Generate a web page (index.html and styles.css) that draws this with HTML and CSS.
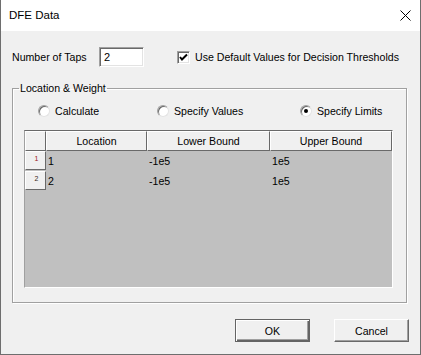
FILE: index.html
```html
<!DOCTYPE html>
<html lang="en">
<head>
    <meta charset="UTF-8">
    <title>DFE Data</title>
    <link rel="stylesheet" href="styles.css">
</head>
<body>
    <div class="dialog">
        <div class="titlebar">
            <span class="title">DFE Data</span>
            <svg class="close" width="11" height="11" viewBox="0 0 11 11">
                <path d="M0.5 0.5 L10.5 10.5 M10.5 0.5 L0.5 10.5" stroke="#000" stroke-width="1" fill="none"/>
            </svg>
        </div>

        <div class="content">
            <div class="taps-row">
                <span class="taps-label">Number of Taps</span>
                <div class="textbox">2</div>
                <div class="checkbox">
                    <svg width="9" height="9" viewBox="0 0 9 9">
                        <path d="M1 4 L3 6.5 L8 1.5" stroke="#000" stroke-width="2" fill="none"/>
                    </svg>
                </div>
                <span class="check-label">Use Default Values for Decision Thresholds</span>
            </div>

            <fieldset class="group">
                <legend>Location &amp; Weight</legend>
                <div class="radio-row">
                    <div class="radio radio-calc"><span class="dot"></span>Calculate</div>
                    <div class="radio radio-values"><span class="dot"></span>Specify Values</div>
                    <div class="radio"><span class="dot checked"></span>Specify Limits</div>
                </div>

                <div class="grid">
                    <div class="grid-row grid-head">
                        <div class="head-cell corner"></div>
                        <div class="head-cell">Location</div>
                        <div class="head-cell">Lower Bound</div>
                        <div class="head-cell">Upper Bound</div>
                    </div>
                    <div class="grid-row">
                        <div class="row-head first">1</div>
                        <div class="cell">1</div>
                        <div class="cell">-1e5</div>
                        <div class="cell">1e5</div>
                    </div>
                    <div class="grid-row">
                        <div class="row-head">2</div>
                        <div class="cell">2</div>
                        <div class="cell">-1e5</div>
                        <div class="cell">1e5</div>
                    </div>
                </div>
            </fieldset>

            <div class="buttons">
                <button class="btn default">OK</button>
                <button class="btn">Cancel</button>
            </div>
        </div>
    </div>
</body>
</html>
```

FILE: styles.css
```css
* {
    box-sizing: border-box;
    margin: 0;
    padding: 0;
}

body {
    background: #f0f0f0;
    font-family: "Liberation Sans", Arial, sans-serif;
    font-size: 10.6px;
    color: #000;
}

.dialog {
    width: 421px;
    height: 355px;
    background: #f0f0f0;
    border: 1px solid #6e6e6e;
    border-top: none;
}

.titlebar {
    height: 31px;
    background: #fff;
    display: flex;
    align-items: center;
    justify-content: space-between;
    padding: 0 9px 0 8px;
}

.title {
    font-size: 11.5px;
    margin-top: -2px;
}

.close {
    display: block;
    margin-top: -1px;
}

.content {
    padding: 16px 11px 0 11px;
}

/* 顶部一行 */
.taps-row {
    display: flex;
    align-items: center;
    height: 20px;
}

.taps-label {
    width: 87px;
}

.textbox {
    width: 45px;
    height: 20px;
    background: #fff;
    border-top: 1px solid #a0a0a0;
    border-left: 1px solid #a0a0a0;
    border-right: 1px solid #fff;
    border-bottom: 1px solid #fff;
    box-shadow: inset 1px 1px 0 #696969, inset -1px -1px 0 #e3e3e3;
    padding: 3px 0 0 4px;
    font-size: 11px;
}

.checkbox {
    width: 13px;
    height: 13px;
    margin-left: 33px;
    background: #fff;
    border-top: 1px solid #a0a0a0;
    border-left: 1px solid #a0a0a0;
    border-right: 1px solid #fff;
    border-bottom: 1px solid #fff;
    box-shadow: inset 1px 1px 0 #696969, inset -1px -1px 0 #e3e3e3;
    display: flex;
    align-items: center;
    justify-content: center;
}

.checkbox svg {
    display: block;
}

.check-label {
    margin-left: 5px;
}

/* 分组框 */
.group {
    width: 395px;
    margin-top: 15px;
    border: 1px solid #a0a0a0;
    box-shadow: 1px 1px 0 #fff, inset 1px 1px 0 #fff;
    padding: 0 13px 14px 11px;
}

.group legend {
    margin-left: -5px;
    padding: 0 1px;
    line-height: 13px;
}

.radio-row {
    display: flex;
    align-items: center;
    height: 14px;
    margin: 9px 0 12px 0;
    padding-left: 14px;
}

.radio {
    display: flex;
    align-items: center;
}

.radio-calc {
    width: 119px;
}

.radio-values {
    width: 143px;
}

.dot {
    width: 12px;
    height: 12px;
    border-radius: 50%;
    background: #fff;
    border: 1px solid;
    border-color: #a0a0a0 #e3e3e3 #e3e3e3 #a0a0a0;
    box-shadow: inset 1px 1px 0 #696969;
    margin-right: 5px;
    position: relative;
}

.dot.checked::after {
    content: "";
    position: absolute;
    left: 3px;
    top: 3px;
    width: 4px;
    height: 4px;
    border-radius: 50%;
    background: #000;
}

/* 表格 */
.grid {
    width: 369px;
    height: 158px;
    background: #c0c0c0;
    border-top: 1px solid #696969;
    border-left: 1px solid #a0a0a0;
    border-right: 1px solid #fff;
    border-bottom: 1px solid #fff;
}

.grid-row {
    display: grid;
    grid-template-columns: 21px 101px 123px 122px;
    height: 20px;
}

.head-cell {
    background: #f0f0f0;
    border-top: 1px solid #fff;
    border-left: 1px solid #fff;
    border-right: 1px solid #696969;
    border-bottom: 1px solid #696969;
    text-align: center;
    line-height: 18px;
}

.row-head {
    height: 19px;
    background: #f0f0f0;
    border-top: 1px solid #fff;
    border-left: 1px solid #fff;
    border-right: 1px solid #696969;
    border-bottom: 1px solid #696969;
    font-size: 7px;
    text-align: center;
    padding: 3px 0 0 2px;
    color: #3a2a20;
}

.row-head.first {
    color: #9a1a1a;
}

.cell {
    padding-left: 2px;
    line-height: 20px;
}

/* 底部按钮 */
.buttons {
    display: flex;
    justify-content: flex-end;
    gap: 24px;
    margin-top: 16px;
}

.btn {
    width: 75px;
    height: 23px;
    font-family: "Liberation Sans", Arial, sans-serif;
    font-size: 10.6px;
    font-weight: normal;
    color: #000;
    background: #f0f0f0;
    border-top: 1px solid #fff;
    border-left: 1px solid #fff;
    border-right: 1px solid #696969;
    border-bottom: 1px solid #696969;
    box-shadow: inset -1px -1px 0 #a0a0a0;
}

.btn.default {
    border: 1px solid #646464;
    box-shadow: inset 1px 1px 0 #fff, inset -1px -1px 0 #646464, inset -2px -2px 0 #a0a0a0;
}
```
